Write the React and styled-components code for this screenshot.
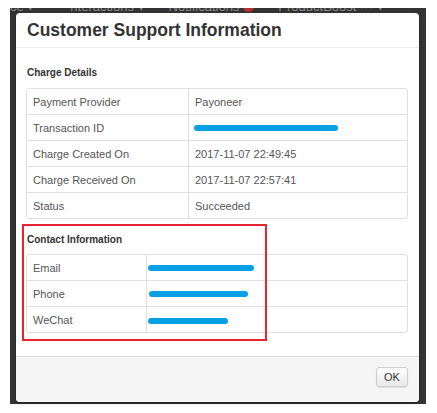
import React from "react";
import styled, { createGlobalStyle } from "styled-components";

const Global = createGlobalStyle`
  html, body { margin: 0; padding: 0; background: #ffffff; }
  body { font-family: "Liberation Sans", Arial, sans-serif; }
  * { box-sizing: border-box; }
`;

const Backdrop = styled.div`
  margin: 8px 11px 9px 10px;
  height: 396px;
  background: #343434;
  display: flex;
  flex-direction: column;
`;

const NavStrip = styled.div`
  height: 5px;
  overflow: hidden;
  display: flex;
  align-items: flex-end;
`;

const NavItem = styled.span`
  flex: none;
  font-size: 13px;
  line-height: 13px;
  height: 13px;
  color: #8a8a8a;
  white-space: nowrap;
  margin-left: ${(p) => p.$ml || 0}px;
  display: inline-flex;
  align-items: center;
  gap: 4px;
`;

const Badge = styled.span`
  display: inline-block;
  width: 11px;
  height: 11px;
  border-radius: 50%;
  background: #b0322d;
`;

const Modal = styled.div`
  margin: 0 7px 2px 6px;
  flex: 1;
  background: #ffffff;
  border-radius: 4px;
  box-shadow: 0 1px 3px rgba(0, 0, 0, 0.4);
  display: flex;
  flex-direction: column;
  overflow: hidden;
`;

const Header = styled.div`
  padding: 6px 11px 5px;
  border-bottom: 1px solid #eeeeee;
`;

const Title = styled.h3`
  margin: 0;
  font-size: 17.5px;
  line-height: 23px;
  font-weight: bold;
  color: #333333;
`;

const Body = styled.div`
  flex: 1;
  padding: 18px 11px 0 10px;
`;

const SectionTitle = styled.h4`
  margin: 0 0 ${(p) => p.$mb || 8}px 1px;
  font-size: 10px;
  line-height: 14px;
  font-weight: bold;
  color: #333333;
`;

const Section = styled.div`
  position: relative;
  margin-top: ${(p) => p.$mt || 0}px;
`;

const Table = styled.table`
  width: 100%;
  border-collapse: separate;
  border-spacing: 0;
  border: 1px solid #e0e0e0;
  border-radius: 3px;
  font-size: 11px;
  color: #555555;
`;

const Cell = styled.td`
  height: ${(p) => p.$h || 26}px;
  padding: 0 6px;
  vertical-align: middle;
  border-top: ${(p) => (p.$first ? "none" : "1px solid #e0e0e0")};
  border-left: ${(p) => (p.$value ? "1px solid #e0e0e0" : "none")};
  width: ${(p) => (p.$w ? p.$w + "px" : "auto")};
  line-height: 14px;
`;

const Annotation = styled.div`
  position: absolute;
  left: -4px;
  top: -9px;
  width: 245px;
  height: 117px;
  border: 2px solid #e6262e;
  pointer-events: none;
`;

const Footer = styled.div`
  background: #f5f5f5;
  border-top: 1px solid #dddddd;
  padding: 10px 11px 15px;
  display: flex;
  justify-content: flex-end;
`;

const Button = styled.button`
  width: 32px;
  height: 20px;
  padding: 0;
  font-family: "Liberation Sans", Arial, sans-serif;
  font-size: 11px;
  color: #333333;
  background: linear-gradient(#ffffff, #e9e9e9);
  border: 1px solid #cfcfcf;
  border-radius: 3px;
  box-shadow: 0 1px 1px rgba(0, 0, 0, 0.08);
`;

const Scribble = ({ width, dx = 0, dy = 0 }) => (
  <svg
    width={Math.max(width + dx + 4, 10)}
    height="10"
    style={{ display: "block", marginTop: dy, overflow: "visible" }}
  >
    <line
      x1={dx + 3}
      y1="5"
      x2={dx + width}
      y2="5"
      stroke="#0aa0e6"
      strokeWidth="6"
      strokeLinecap="round"
    />
  </svg>
);

const charge = [
  ["Payment Provider", "Payoneer"],
  ["Transaction ID", <Scribble width={141} dx={-1} />],
  ["Charge Created On", "2017-11-07 22:49:45"],
  ["Charge Received On", "2017-11-07 22:57:41"],
  ["Status", "Succeeded"],
];

const contact = [
  ["Email", <Scribble width={103} dx={-5} dy={1} />, 25],
  ["Phone", <Scribble width={96} dx={-4} />, 26],
  ["WeChat", <Scribble width={77} dx={-5} dy={2} />, 26],
];

export default function App() {
  return (
    <>
      <Global />
      <Backdrop>
        <NavStrip>
          <NavItem>ce ▾</NavItem>
          <NavItem $ml={36}>nteractions ▾</NavItem>
          <NavItem $ml={24}>
            Notifications <Badge />
          </NavItem>
          <NavItem $ml={24}>ProductBoost ··· ▾</NavItem>
        </NavStrip>
        <Modal>
          <Header>
            <Title>Customer Support Information</Title>
          </Header>
          <Body>
            <Section>
              <SectionTitle $mb={8}>Charge Details</SectionTitle>
              <Table>
                <tbody>
                  {charge.map(([k, v], i) => (
                    <tr key={k}>
                      <Cell $first={i === 0} $w={161} $h={i === 0 ? 25 : 26}>
                        {k}
                      </Cell>
                      <Cell $first={i === 0} $value $h={i === 0 ? 25 : 26}>
                        {v}
                      </Cell>
                    </tr>
                  ))}
                </tbody>
              </Table>
            </Section>
            <Section $mt={14}>
              <SectionTitle $mb={7}>Contact Information</SectionTitle>
              <Table>
                <tbody>
                  {contact.map(([k, v, h], i) => (
                    <tr key={k}>
                      <Cell $first={i === 0} $w={119} $h={h}>
                        {k}
                      </Cell>
                      <Cell $first={i === 0} $value $h={h}>
                        {v}
                      </Cell>
                    </tr>
                  ))}
                </tbody>
              </Table>
              <Annotation />
            </Section>
          </Body>
          <Footer>
            <Button>OK</Button>
          </Footer>
        </Modal>
      </Backdrop>
    </>
  );
}
